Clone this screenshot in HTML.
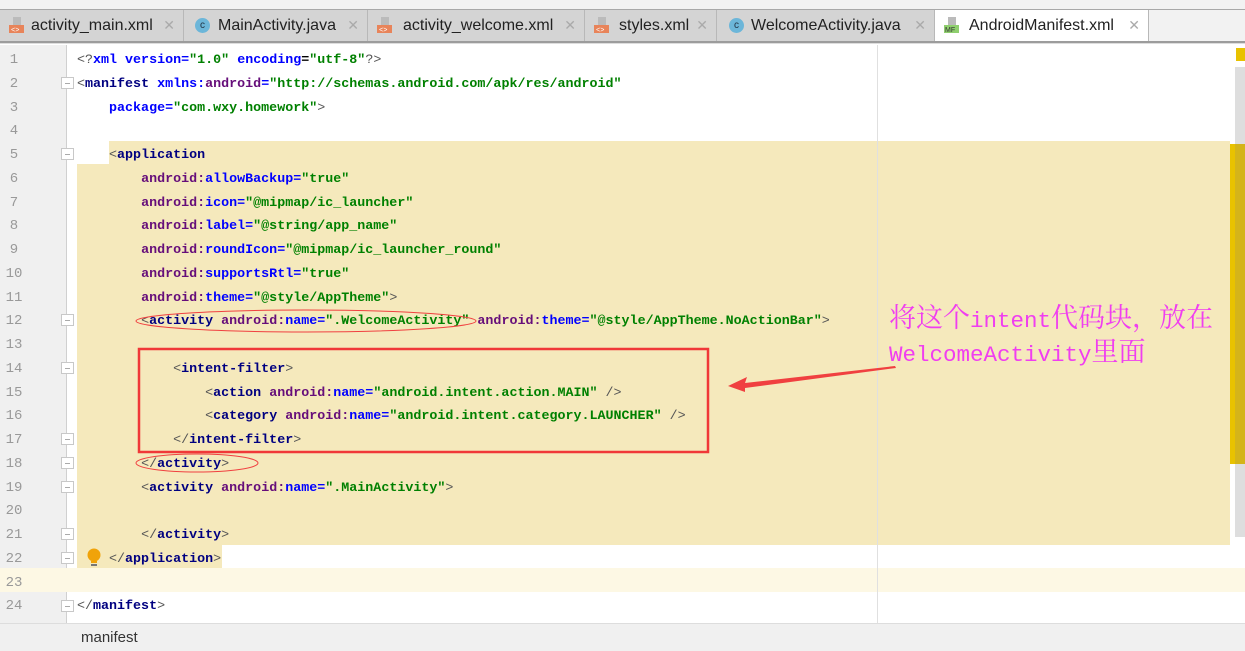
<!DOCTYPE html>
<html><head><meta charset="utf-8"><style>
*{margin:0;padding:0;box-sizing:border-box}
body{width:1245px;height:651px;overflow:hidden;background:#fff;position:relative;font-family:"Liberation Sans",sans-serif}
.top{position:absolute;left:0;top:0;width:1245px;height:10px;background:#f2f2f2;border-bottom:1px solid #a8a8a8}
.tabs{position:absolute;left:0;top:10px;width:1245px;height:31px;background:#f2f2f2}
.tab{position:absolute;top:0;height:31px;background:#d4d4d4;border-right:1px solid #b8b8b8;font-size:16px;color:#222;line-height:31px;white-space:nowrap}
.tab.act{background:#fff}
.tab .ic{position:absolute;left:9px;top:7px;width:15px;height:16px}
.tab .t{position:absolute;left:31px}
.tab .x{position:absolute;right:8px;color:#aaa;font-size:14px}
.cic{position:absolute;left:8px;top:8px;width:15px;height:15px;border-radius:50%;background:#6cb6d9;color:#234;font-size:10px;line-height:15px;text-align:center}
.sep{position:absolute;left:0;top:41px;width:1245px;height:3px;background:#9c9c9c;border-bottom:1px solid #ddd}
.gut{position:absolute;left:0;top:45px;width:67px;height:578px;background:#f0f0f0;border-right:1px solid #d0d0d0}
.ln{position:absolute;left:0;width:28px;text-align:center;color:#999;font:14px "Liberation Mono",monospace}
.fold{position:absolute;left:61px;width:13px;height:12px;border:1px solid #c8c8c8;background:#fff}
.fold:after{content:"";position:absolute;left:3px;top:5px;width:5px;height:1px;background:#aaa}
.code{position:absolute;white-space:pre;font:bold 13.35px "Liberation Mono",monospace;color:#000;height:23.75px;line-height:23.75px}
.tg{color:#000080}.ns{color:#660e7a}.at{color:#0000ff}.v{color:#008000}.p{color:#555;font-weight:normal}
.yl{position:absolute;background:#f5e9bc}
</style></head><body>
<div class="top"></div>
<div class="tabs">
 <div class="tab" style="left:0;width:184px"><svg class="ic" viewBox="0 0 15 16"><rect x="4" y="0" width="8" height="8" fill="#bbb"/><rect x="0" y="8" width="15" height="8" fill="#e8845a"/><text x="2" y="15" font-size="7" fill="#fff" font-family="Liberation Mono">&lt;&gt;</text></svg><span class="t">activity_main.xml</span><span class="x">✕</span></div>
 <div class="tab" style="left:184px;width:184px"><div class="cic" style="left:11px">c</div><span class="t" style="left:34px">MainActivity.java</span><span class="x">✕</span></div>
 <div class="tab" style="left:368px;width:217px"><svg class="ic" viewBox="0 0 15 16"><rect x="4" y="0" width="8" height="8" fill="#bbb"/><rect x="0" y="8" width="15" height="8" fill="#e8845a"/><text x="2" y="15" font-size="7" fill="#fff" font-family="Liberation Mono">&lt;&gt;</text></svg><span class="t" style="left:35px">activity_welcome.xml</span><span class="x">✕</span></div>
 <div class="tab" style="left:585px;width:132px"><svg class="ic" viewBox="0 0 15 16"><rect x="4" y="0" width="8" height="8" fill="#bbb"/><rect x="0" y="8" width="15" height="8" fill="#e8845a"/><text x="2" y="15" font-size="7" fill="#fff" font-family="Liberation Mono">&lt;&gt;</text></svg><span class="t" style="left:34px">styles.xml</span><span class="x">✕</span></div>
 <div class="tab" style="left:717px;width:218px"><div class="cic" style="left:12px">c</div><span class="t" style="left:34px">WelcomeActivity.java</span><span class="x">✕</span></div>
 <div class="tab act" style="left:935px;width:214px;height:32px"><svg class="ic" viewBox="0 0 15 16"><rect x="4" y="0" width="8" height="8" fill="#bbb"/><rect x="0" y="8" width="16" height="8" fill="#8fcf6e"/><text x="1" y="15" font-size="7" fill="#333" font-family="Liberation Sans">MF</text></svg><span class="t" style="left:34px">AndroidManifest.xml</span><span class="x">✕</span></div>
</div>
<div class="sep"></div>

<div class="gut"></div>
<div class="yl" style="left:0;top:568px;width:1245px;height:24px;background:#fdf8e4"></div>
<div class="yl" style="left:109px;top:141px;width:1121px;height:23px"></div>
<div class="yl" style="left:77px;top:164px;width:1153px;height:381px"></div>
<div class="yl" style="left:77px;top:545px;width:145px;height:23px"></div>
<div style="position:absolute;left:877px;top:45px;width:1px;height:578px;background:#e0e0e0"></div>
<div style="position:absolute;left:1236px;top:48px;width:9px;height:13px;background:#e8c200"></div>
<div style="position:absolute;left:1235px;top:67px;width:10px;height:470px;background:#dedede"></div>
<div style="position:absolute;left:1230px;top:144px;width:15px;height:320px;background:#d4b41a;border-left:5px solid #e8c200"></div>

<div class="ln" style="top:49px;line-height:23.75px">1<br>2<br>3<br>4<br>5<br>6<br>7<br>8<br>9<br>10<br>11<br>12<br>13<br>14<br>15<br>16<br>17<br>18<br>19<br>20<br>21<br>22<br>23<br>24</div>
<div class="fold" style="top:77px"></div><div class="fold" style="top:148px"></div><div class="fold" style="top:314px"></div><div class="fold" style="top:362px"></div><div class="fold" style="top:433px"></div><div class="fold" style="top:457px"></div><div class="fold" style="top:481px"></div><div class="fold" style="top:528px"></div><div class="fold" style="top:552px"></div><div class="fold" style="top:600px"></div>

<div class="code" style="left:77px;top:49px"><span class="p">&lt;?</span><span class="at">xml version</span><span class="at">=</span><span class="v">"1.0"</span> <span class="at">encoding</span>=<span class="v">"utf-8"</span><span class="p">?&gt;</span></div>
<div class="code" style="left:77px;top:72.75px"><span class="p">&lt;</span><span class="tg">manifest</span> <span class="at">xmlns:</span><span class="ns">android</span><span class="at">=</span><span class="v">"http://schemas.android.com/apk/res/android"</span></div>
<div class="code" style="left:77px;top:96.5px">    <span class="at">package=</span><span class="v">"com.wxy.homework"</span><span class="p">&gt;</span></div>
<div class="code" style="left:77px;top:144px">    <span class="p">&lt;</span><span class="tg">application</span></div>
<div class="code" style="left:77px;top:167.75px">        <span class="ns">android:</span><span class="at">allowBackup=</span><span class="v">"true"</span></div>
<div class="code" style="left:77px;top:191.5px">        <span class="ns">android:</span><span class="at">icon=</span><span class="v">"@mipmap/ic_launcher"</span></div>
<div class="code" style="left:77px;top:215.25px">        <span class="ns">android:</span><span class="at">label=</span><span class="v">"@string/app_name"</span></div>
<div class="code" style="left:77px;top:239px">        <span class="ns">android:</span><span class="at">roundIcon=</span><span class="v">"@mipmap/ic_launcher_round"</span></div>
<div class="code" style="left:77px;top:262.75px">        <span class="ns">android:</span><span class="at">supportsRtl=</span><span class="v">"true"</span></div>
<div class="code" style="left:77px;top:286.5px">        <span class="ns">android:</span><span class="at">theme=</span><span class="v">"@style/AppTheme"</span><span class="p">&gt;</span></div>
<div class="code" style="left:77px;top:310.25px">        <span class="p">&lt;</span><span class="tg">activity</span> <span class="ns">android:</span><span class="at">name=</span><span class="v">".WelcomeActivity"</span> <span class="ns">android:</span><span class="at">theme=</span><span class="v">"@style/AppTheme.NoActionBar"</span><span class="p">&gt;</span></div>
<div class="code" style="left:77px;top:357.75px">            <span class="p">&lt;</span><span class="tg">intent-filter</span><span class="p">&gt;</span></div>
<div class="code" style="left:77px;top:381.5px">                <span class="p">&lt;</span><span class="tg">action</span> <span class="ns">android:</span><span class="at">name=</span><span class="v">"android.intent.action.MAIN"</span> <span class="p">/&gt;</span></div>
<div class="code" style="left:77px;top:405.25px">                <span class="p">&lt;</span><span class="tg">category</span> <span class="ns">android:</span><span class="at">name=</span><span class="v">"android.intent.category.LAUNCHER"</span> <span class="p">/&gt;</span></div>
<div class="code" style="left:77px;top:429px">            <span class="p">&lt;/</span><span class="tg">intent-filter</span><span class="p">&gt;</span></div>
<div class="code" style="left:77px;top:452.75px">        <span class="p">&lt;/</span><span class="tg">activity</span><span class="p">&gt;</span></div>
<div class="code" style="left:77px;top:476.5px">        <span class="p">&lt;</span><span class="tg">activity</span> <span class="ns">android:</span><span class="at">name=</span><span class="v">".MainActivity"</span><span class="p">&gt;</span></div>
<div class="code" style="left:77px;top:524px">        <span class="p">&lt;/</span><span class="tg">activity</span><span class="p">&gt;</span></div>
<div class="code" style="left:77px;top:547.75px">    <span class="p">&lt;/</span><span class="tg">application</span><span class="p">&gt;</span></div>
<div class="code" style="left:77px;top:595.25px"><span class="p">&lt;/</span><span class="tg">manifest</span><span class="p">&gt;</span></div>

<svg style="position:absolute;left:86px;top:548px" width="16" height="20" viewBox="0 0 16 20"><circle cx="8" cy="7" r="6.5" fill="#f0a30a"/><rect x="5" y="13" width="6" height="2" fill="#f0a30a"/><rect x="5" y="16" width="6" height="2" fill="#777"/></svg>

<svg style="position:absolute;left:0;top:0" width="1245" height="651">
 <ellipse cx="306" cy="321" rx="170" ry="11" fill="none" stroke="#f04040" stroke-width="1"/>
 <ellipse cx="197" cy="463" rx="61" ry="9" fill="none" stroke="#f04040" stroke-width="1"/>
 <rect x="139" y="349" width="569" height="103" fill="none" stroke="#f03838" stroke-width="2.5"/>
 <polygon points="895,366 745,383 747,377 728,386 745,392 745,388 896,368" fill="#f04040"/>
</svg>

<div style="position:absolute;left:889px;top:304px;color:#f03ef0;font:22.5px 'Liberation Mono','Noto Serif CJK SC',monospace;line-height:34px;white-space:nowrap"><span style="font-size:27px">将这个</span>intent<span style="font-size:27px">代码块，放在</span><br>WelcomeActivity<span style="font-size:27px">里面</span></div>

<div style="position:absolute;left:0;top:623px;width:1245px;height:28px;background:#f0f0f0;border-top:1px solid #ddd;font-size:15px;color:#333;padding:5px 0 0 81px">manifest</div>
</body></html>
